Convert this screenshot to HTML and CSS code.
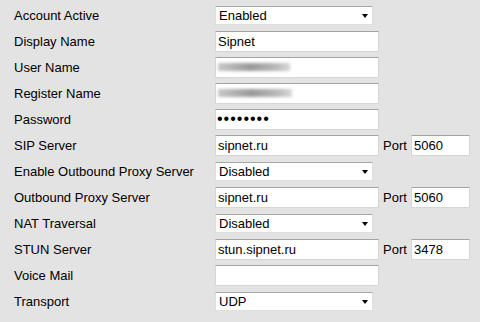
FILE: index.html
```html
<!DOCTYPE html>
<html>
  <head>
    <title>SIP Account</title>
    <link rel="stylesheet" href="styles.css">
  </head>
  <body>
    <div class="form">
      <div class="row">
        <label>Account Active</label>
        <div class="sel"><select><option>Enabled</option><option>Disabled</option></select></div>
      </div>
      <div class="row">
        <label>Display Name</label>
        <input type="text" value="Sipnet" />
      </div>
      <div class="row">
        <label>User Name</label>
        <div class="field"><span class="blur"></span></div>
      </div>
      <div class="row">
        <label>Register Name</label>
        <div class="field"><span class="blur wide"></span></div>
      </div>
      <div class="row">
        <label>Password</label>
        <input type="password" value="sipnetpw" />
      </div>
      <div class="row">
        <label>SIP Server</label>
        <input type="text" value="sipnet.ru" />
        <span class="port">Port</span>
        <input type="text" class="portval" value="5060" />
      </div>
      <div class="row">
        <label>Enable Outbound Proxy Server</label>
        <div class="sel"><select><option>Disabled</option><option>Enabled</option></select></div>
      </div>
      <div class="row">
        <label>Outbound Proxy Server</label>
        <input type="text" value="sipnet.ru" />
        <span class="port">Port</span>
        <input type="text" class="portval" value="5060" />
      </div>
      <div class="row">
        <label>NAT Traversal</label>
        <div class="sel"><select><option>Disabled</option><option>STUN</option></select></div>
      </div>
      <div class="row">
        <label>STUN Server</label>
        <input type="text" value="stun.sipnet.ru" />
        <span class="port">Port</span>
        <input type="text" class="portval" value="3478" />
      </div>
      <div class="row">
        <label>Voice Mail</label>
        <input type="text" value="" />
      </div>
      <div class="row">
        <label>Transport</label>
        <div class="sel"><select><option>UDP</option><option>TCP</option></select></div>
      </div>
    </div>
  </body>
</html>
```

FILE: styles.css
```css
body {
  margin: 0;
  background: #e3e3e3;
  font-family: "Liberation Sans", Arial, sans-serif;
  font-size: 13px;
  color: #000;
}
.form {
  padding: 2px 0 0 14px;
}
.row {
  display: flex;
  align-items: center;
  height: 26px;
}
.row label {
  width: 201px;
}
.row input,
.field {
  box-sizing: border-box;
  width: 164px;
  height: 21px;
  margin: 0;
  padding: 0 2px;
  border: 1px solid #d6d6d6;
  border-top-color: #a3a3a3;
  background: #fff;
  font-family: "Liberation Sans", Arial, sans-serif;
  font-size: 13px;
  color: #000;
  outline: none;
}
.row input[type="password"] {
  font-size: 16px;
  letter-spacing: 1px;
  padding-left: 1px;
}
.field {
  display: flex;
  align-items: center;
  padding: 0 1px;
}
.blur {
  display: block;
  width: 72px;
  height: 8px;
  margin-left: 1px;
  background: linear-gradient(90deg, #c8c8c8, #9a9a9a 45%, #b8b8b8 80%, #d8d8d8);
  filter: blur(1.5px);
}
.blur.wide {
  width: 74px;
}
.port {
  margin-left: 4px;
  width: 28px;
}
.row input.portval {
  width: 59px;
}
.sel {
  position: relative;
  width: 158px;
  height: 19px;
}
.sel select {
  appearance: none;
  -webkit-appearance: none;
  box-sizing: border-box;
  width: 100%;
  height: 100%;
  margin: 0;
  padding: 0 0 0 3px;
  border: 1px solid #dedede;
  border-top-color: #a8a8a8;
  border-radius: 0;
  background: #fff;
  font-family: "Liberation Sans", Arial, sans-serif;
  font-size: 13px;
  color: #000;
  outline: none;
}
.sel::after {
  content: "";
  position: absolute;
  right: 5px;
  top: 8px;
  border-left: 3.5px solid transparent;
  border-right: 3.5px solid transparent;
  border-top: 4px solid #000;
  pointer-events: none;
}
```
